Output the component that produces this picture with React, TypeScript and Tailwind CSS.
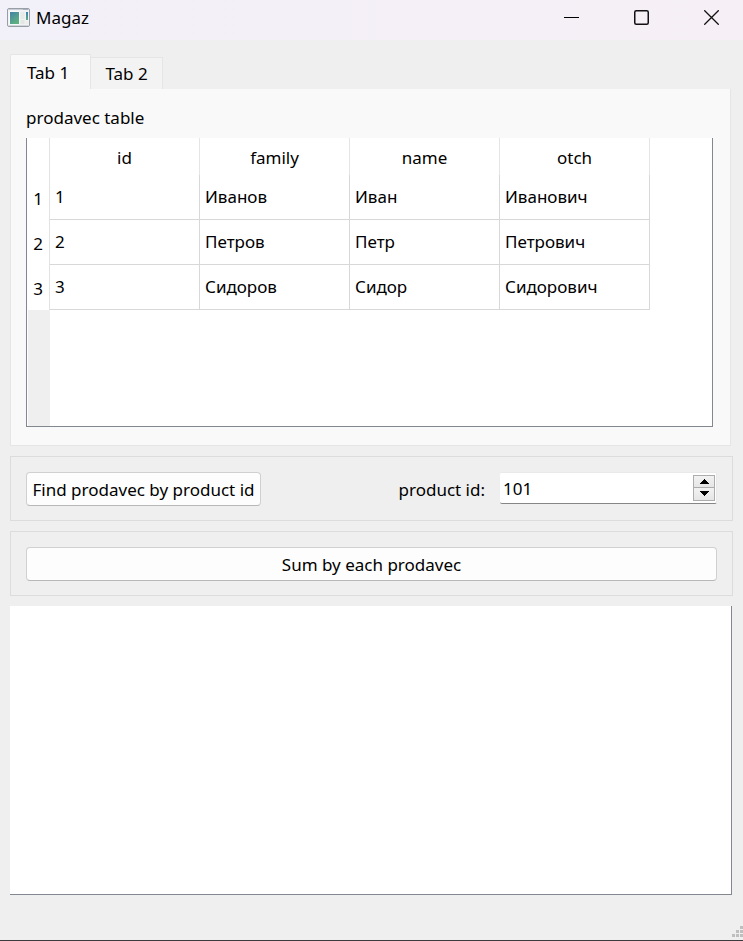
import { useState } from "react";

const columns = ["id", "family", "name", "otch"];
const rows = [
  ["1", "Иванов", "Иван", "Иванович"],
  ["2", "Петров", "Петр", "Петрович"],
  ["3", "Сидоров", "Сидор", "Сидорович"],
];

function AppIcon() {
  return (
    <svg width="23" height="19" viewBox="0 0 23 19" aria-hidden="true">
      <defs>
        <linearGradient id="pane" x1="0" y1="0" x2="0.6" y2="1">
          <stop offset="0" stopColor="#4282a6" />
          <stop offset="1" stopColor="#5fb27f" />
        </linearGradient>
        <linearGradient id="strip" x1="0" y1="0" x2="0" y2="1">
          <stop offset="0" stopColor="#3f7fb0" />
          <stop offset="1" stopColor="#62ad8a" />
        </linearGradient>
      </defs>
      <rect x="0.5" y="0.5" width="22" height="18" rx="1.5" fill="#f0f2f4" stroke="#979ea6" />
      <path d="M1 1.5h21" stroke="#c9ced6" />
      <path d="M16 1.5h5" stroke="#a9b1bb" />
      <path d="M1.5 17.5h20" stroke="#d2d6da" />
      <rect x="2.5" y="3.5" width="10" height="13" fill="#fff" />
      <rect x="3" y="4" width="9" height="12" fill="url(#pane)" />
      <rect x="13.5" y="4" width="4" height="7" fill="#e8eae6" />
      <rect x="13.5" y="12" width="4" height="4" fill="#e3e6e2" />
      <rect x="19" y="4" width="2" height="8" fill="url(#strip)" />
      <rect x="18.5" y="13" width="3" height="3" fill="#eceeec" />
    </svg>
  );
}

function TitleBar() {
  return (
    <header className="flex h-10 shrink-0 items-center justify-between bg-linear-to-r from-[#f2f0f8] to-[#f6eff6] pl-[7px]">
      <div className="flex items-center gap-[6px] pb-[6px]">
        <AppIcon />
        <h1 className="pt-[2px] leading-6">Magaz</h1>
      </div>
      <div className="flex gap-[7px] pb-[5px]">
        <button type="button" aria-label="Minimize" className="flex h-[35px] w-[63px] items-center justify-center">
          <svg width="15" height="15" viewBox="0 0 15 15">
            <path d="M0 7.5h15" stroke="#000" />
          </svg>
        </button>
        <button type="button" aria-label="Maximize" className="flex h-[35px] w-[63px] items-center justify-center">
          <svg width="15" height="15" viewBox="0 0 15 15" fill="none" stroke="#111" strokeWidth="1.5">
            <rect x="0.75" y="0.75" width="13.5" height="13.5" rx="1.5" />
          </svg>
        </button>
        <button type="button" aria-label="Close" className="flex h-[35px] w-[63px] items-center justify-center">
          <svg width="15" height="15" viewBox="0 0 15 15" stroke="#111" strokeWidth="1.3">
            <path d="M0.3 0.3l14.4 14.4M14.7 0.3L0.3 14.7" />
          </svg>
        </button>
      </div>
    </header>
  );
}

function ProdavecTable() {
  return (
    <div className="flex h-[289px] flex-col overflow-hidden border-r border-b border-l border-[#828790] bg-white">
      <table className="w-[623px] table-fixed border-separate border-spacing-0" aria-labelledby="table-label">
        <thead>
          <tr className="h-[37px]">
            <td className="w-[23px] border-r border-[#e2e2e2]" />
            {columns.map((column) => (
              <th key={column} scope="col" className="border-r border-[#e5e5e5] p-0 pt-[2px] text-center font-normal">
                {column}
              </th>
            ))}
          </tr>
        </thead>
        <tbody>
          {rows.map((row) => (
            <tr key={row[0]} className="h-[45px]">
              <th scope="row" className="border-r border-[#e2e2e2] p-0 pt-[2px] text-center font-normal">
                {row[0]}
              </th>
              {row.map((cell, index) => (
                <td key={index} className="border-r border-b border-[#d8d8d8] px-[5px] py-0">
                  {cell}
                </td>
              ))}
            </tr>
          ))}
        </tbody>
      </table>
      <div className="ml-px w-[22px] flex-1 bg-[#efefef]" />
    </div>
  );
}

const pushButton =
  "h-[34px] rounded-[4px] border border-[#d0d0d0] border-b-[#b8b8b8] bg-[#fdfdfd] pt-[2px] active:bg-[#f5f5f5]";
const groupBox = "flex h-[65px] items-center border border-[#dcdcdc] px-[15px]";
const stepButton =
  "flex flex-1 items-center justify-center bg-linear-to-b from-[#f2f2f2] to-[#e6e6e6]";

export default function App() {
  const [tab, setTab] = useState(1);
  const [productId, setProductId] = useState(101);

  return (
    <div className="flex min-h-screen flex-col border-b border-[#3c3a3c] bg-[#efefef] font-['Noto_Sans','Open_Sans',sans-serif] text-[17px] leading-6 text-black">
      <TitleBar />
      <main className="flex flex-1 flex-col gap-[10px] px-[10px] pt-[14px]">
        <section className="mr-[2px]">
          <div role="tablist" className="flex h-[35px] items-end">
            {[1, 2].map((n) => (
              <button
                key={n}
                type="button"
                role="tab"
                id={`tab-${n}`}
                aria-selected={tab === n}
                aria-controls="tab-panel"
                onClick={() => setTab(n)}
                className={
                  tab === n
                    ? "h-[35px] w-[81px] rounded-t-[2px] border-x border-t border-[#e5e5e5] bg-[#f9f9f9] pt-px pr-[5px]"
                    : "h-[32px] w-[72px] border-t border-r border-[#e5e5e5] bg-[#f3f3f3]"
                }
              >
                Tab {n}
              </button>
            ))}
          </div>
          <div
            role="tabpanel"
            id="tab-panel"
            aria-labelledby={`tab-${tab}`}
            className="h-[357px] border-r border-b border-l border-[#e5e5e5] bg-[#f9f9f9] pt-[17px] pr-[17px] pl-[15px]"
          >
            {tab === 1 && (
              <>
                <p id="table-label" className="mb-2">
                  prodavec table
                </p>
                <ProdavecTable />
              </>
            )}
          </div>
        </section>

        <section className={`${groupBox} justify-between`}>
          <button type="button" className={`${pushButton} w-[235px]`}>
            Find prodavec by product id
          </button>
          <div className="flex items-center gap-[15px]">
            <label htmlFor="product-id" className="pt-[2px]">
              product id:
            </label>
            <div className="mb-[2px] flex h-[32px] w-[217px] items-center rounded-[2px] border-t border-r border-b border-t-[#e9e9e9] border-r-[#e9e9e9] border-b-[#868686] bg-white pr-px">
              <input
                id="product-id"
                type="number"
                value={productId}
                onChange={(event) => setProductId(Number(event.target.value))}
                className="h-[26px] min-w-0 flex-1 [appearance:textfield] bg-transparent pt-[2px] pl-[3px] outline-none [&::-webkit-inner-spin-button]:appearance-none"
              />
              <div className="flex h-[26px] w-[22px] flex-col gap-px border border-[#adadad] bg-[#adadad]">
                <button type="button" aria-label="Increase" className={stepButton} onClick={() => setProductId(productId + 1)}>
                  <svg width="9" height="5" viewBox="0 0 9 5" shapeRendering="crispEdges">
                    <path d="M4 0h1v1h1v1h1v1h1v1h1v1H0V4h1V3h1V2h1V1h1z" />
                  </svg>
                </button>
                <button type="button" aria-label="Decrease" className={stepButton} onClick={() => setProductId(productId - 1)}>
                  <svg width="9" height="5" viewBox="0 0 9 5" shapeRendering="crispEdges">
                    <path d="M0 0h9v1H8v1H7v1H6v1H5v1H4V4H3V3H2V2H1V1H0z" />
                  </svg>
                </button>
              </div>
            </div>
          </div>
        </section>

        <section className={groupBox}>
          <button type="button" className={`${pushButton} flex-1`}>
            Sum by each prodavec
          </button>
        </section>

        <textarea
          aria-label="Results"
          readOnly
          className="mr-px min-h-[120px] flex-1 resize-none border-r border-b border-[#828790] bg-white p-1 outline-none"
        />
      </main>
      <footer className="flex h-[45px] shrink-0 items-end justify-end">
        <svg width="12" height="14" viewBox="0 0 12 14" fill="#bfbfbf" aria-hidden="true">
          <path d="M9 0h3v3h-3zM5 4h3v3h-3zM9 4h3v3h-3zM1 8h3v3h-3zM5 8h3v3h-3zM9 8h3v3h-3z" />
        </svg>
      </footer>
    </div>
  );
}
